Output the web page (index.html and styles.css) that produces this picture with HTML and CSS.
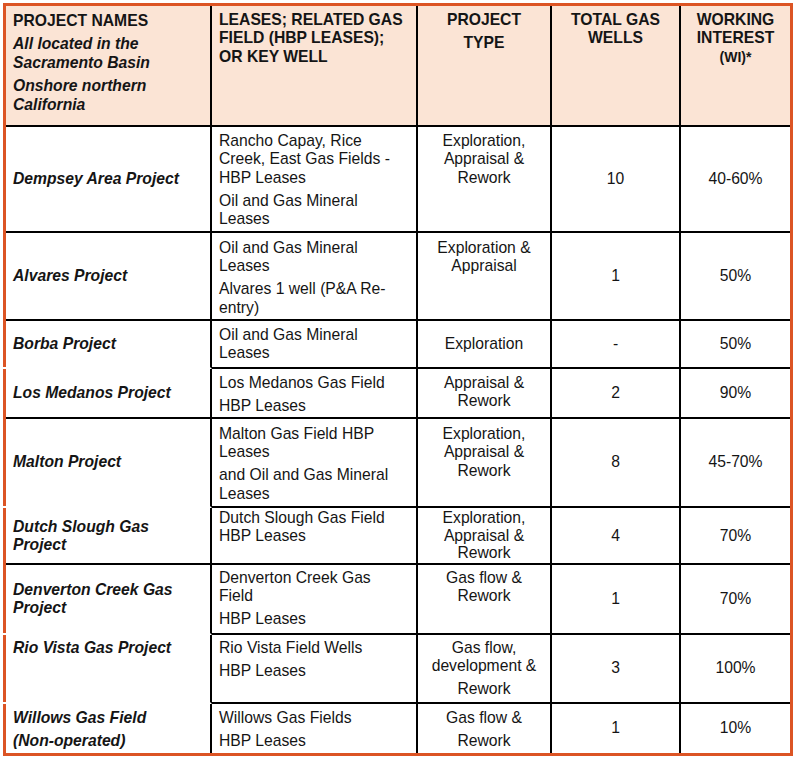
FILE: index.html
```html
<!DOCTYPE html>
<html lang="en">
<head>
<meta charset="utf-8">
<title>Sacramento Basin Projects</title>
<link rel="stylesheet" href="styles.css">
</head>
<body>
<div class="page">
<table class="projects">
<colgroup><col class="c1"><col class="c2"><col class="c3"><col class="c4"><col class="c5"></colgroup>
<thead>
<tr class="r-head">
<th class="name"><p class="hd">PROJECT NAMES</p><p>All located in the<br>Sacramento Basin</p><p>Onshore northern<br>California</p></th>
<th class="lease"><p>LEASES; RELATED GAS<br>FIELD (HBP LEASES);<br>OR KEY WELL</p></th>
<th class="type"><p>PROJECT</p><p>TYPE</p></th>
<th class="type"><p>TOTAL GAS<br>WELLS</p></th>
<th class="type"><p>WORKING<br>INTEREST<br><span class="small">(WI)*</span></p></th>
</tr>
</thead>
<tbody>
<tr class="r-dempsey">
<td class="name">Dempsey Area Project</td>
<td class="lease"><p>Rancho Capay, Rice<br>Creek, East Gas Fields -<br>HBP Leases</p><p>Oil and Gas Mineral<br>Leases</p></td>
<td class="type"><p>Exploration,<br>Appraisal &amp;<br>Rework</p></td>
<td class="num">10</td>
<td class="num">40-60%</td>
</tr>
<tr class="r-alvares">
<td class="name">Alvares Project</td>
<td class="lease"><p>Oil and Gas Mineral<br>Leases</p><p>Alvares 1 well (P&amp;A Re-<br>entry)</p></td>
<td class="type"><p>Exploration &amp;<br>Appraisal</p></td>
<td class="num">1</td>
<td class="num">50%</td>
</tr>
<tr class="r-borba">
<td class="name open">Borba Project</td>
<td class="lease"><p>Oil and Gas Mineral<br>Leases</p></td>
<td class="type mid"><p>Exploration</p></td>
<td class="num">-</td>
<td class="num">50%</td>
</tr>
<tr class="r-medanos">
<td class="name">Los Medanos Project</td>
<td class="lease"><p>Los Medanos Gas Field</p><p>HBP Leases</p></td>
<td class="type"><p>Appraisal &amp;<br>Rework</p></td>
<td class="num">2</td>
<td class="num">90%</td>
</tr>
<tr class="r-malton">
<td class="name open">Malton Project</td>
<td class="lease"><p>Malton Gas Field HBP<br>Leases</p><p>and Oil and Gas Mineral<br>Leases</p></td>
<td class="type"><p>Exploration,<br>Appraisal &amp;<br>Rework</p></td>
<td class="num">8</td>
<td class="num">45-70%</td>
</tr>
<tr class="r-dutch">
<td class="name">Dutch Slough Gas<br>Project</td>
<td class="lease"><p>Dutch Slough Gas Field<br>HBP Leases</p></td>
<td class="type"><p>Exploration,<br>Appraisal &amp;<br>Rework</p></td>
<td class="num">4</td>
<td class="num">70%</td>
</tr>
<tr class="r-denverton">
<td class="name open">Denverton Creek Gas<br>Project</td>
<td class="lease"><p>Denverton Creek Gas<br>Field</p><p>HBP Leases</p></td>
<td class="type"><p>Gas flow &amp;<br>Rework</p></td>
<td class="num">1</td>
<td class="num">70%</td>
</tr>
<tr class="r-rio">
<td class="name top open">Rio Vista Gas Project</td>
<td class="lease"><p>Rio Vista Field Wells</p><p>HBP Leases</p></td>
<td class="type"><p>Gas flow,<br>development &amp;</p><p>Rework</p></td>
<td class="num">3</td>
<td class="num">100%</td>
</tr>
<tr class="r-willows">
<td class="name top"><p>Willows Gas Field</p><p>(Non-operated)</p></td>
<td class="lease"><p>Willows Gas Fields</p><p>HBP Leases</p></td>
<td class="type"><p>Gas flow &amp;</p><p>Rework</p></td>
<td class="num">1</td>
<td class="num">10%</td>
</tr>
</tbody>
</table>
</div>
</body>
</html>
```

FILE: styles.css
```css
* { box-sizing: border-box; }
body {
  margin: 0;
  background: #ffffff;
  font-family: "Liberation Sans", Arial, sans-serif;
  color: #151515;
}
.page {
  padding: 3px 0 0 3px;
}
.projects {
  border-collapse: separate;
  border-spacing: 0;
  table-layout: fixed;
  width: 790px;
  border: 3px solid #dc5424;
  font-size: 15.7px;
  line-height: 18.4px;
}
.c1 { width: 206px; }
.c2 { width: 206px; }
.c3 { width: 134px; }
.c4 { width: 129px; }
.c5 { width: 109px; }

th, td {
  border-right: 2px solid #000;
  border-bottom: 2px solid #000;
  padding: 5px 5px 0 7px;
  vertical-align: top;
  text-align: left;
  font-weight: normal;
}
th:last-child, td:last-child { border-right: none; }
tbody tr:last-child td { border-bottom: none; }

p { margin: 0; }
p + p { margin-top: 4.6px; }

thead th {
  background: #fbe4d5;
  font-weight: bold;
  padding-top: 5px;
}
thead th.name {
  font-style: italic;
  vertical-align: top;
  padding-top: 4.5px;
  line-height: 19px;
}
thead th.name p + p { margin-top: 4px; }
thead th.name .hd { font-style: normal; }
thead th .small { font-size: 14px; }

.name {
  font-weight: bold;
  font-style: italic;
  vertical-align: middle;
  padding-left: 7px;
  position: relative;
}
tbody .name { padding-top: 0; }
.name.top { vertical-align: top; padding-top: 5px; }
.name.open { border-bottom-color: transparent; }
.name.open::after {
  content: "";
  position: absolute;
  left: -3px;
  bottom: -2px;
  width: 3px;
  height: 2px;
  background: #ffffff;
}

.type {
  text-align: center;
  padding-left: 4px;
  padding-right: 4px;
}
.type.mid { vertical-align: middle; padding-top: 0; }
.num {
  text-align: center;
  vertical-align: middle;
  padding: 0 4px;
}

.r-head { height: 121px; }
.r-dempsey { height: 106px; }
.r-dempsey .lease, .r-dempsey .type { padding-top: 5px; }
.r-alvares { height: 88px; }
.r-alvares .lease, .r-alvares .type { padding-top: 6px; }
.r-borba { height: 48px; }
.r-medanos { height: 50px; }
.r-malton { height: 89px; }
.r-malton .lease, .r-malton .type { padding-top: 6px; }
.r-dutch { height: 57px; }
.r-dutch td { line-height: 17.6px; }
.r-dutch .lease, .r-dutch .type { padding-top: 1px; }
.r-denverton { height: 70px; }
.r-denverton .lease, .r-denverton .type { padding-top: 4px; }
.r-rio { height: 69px; }
.r-rio .lease, .r-rio .type, .r-rio .name.top { padding-top: 4px; }
.r-willows { height: 49px; }
```
